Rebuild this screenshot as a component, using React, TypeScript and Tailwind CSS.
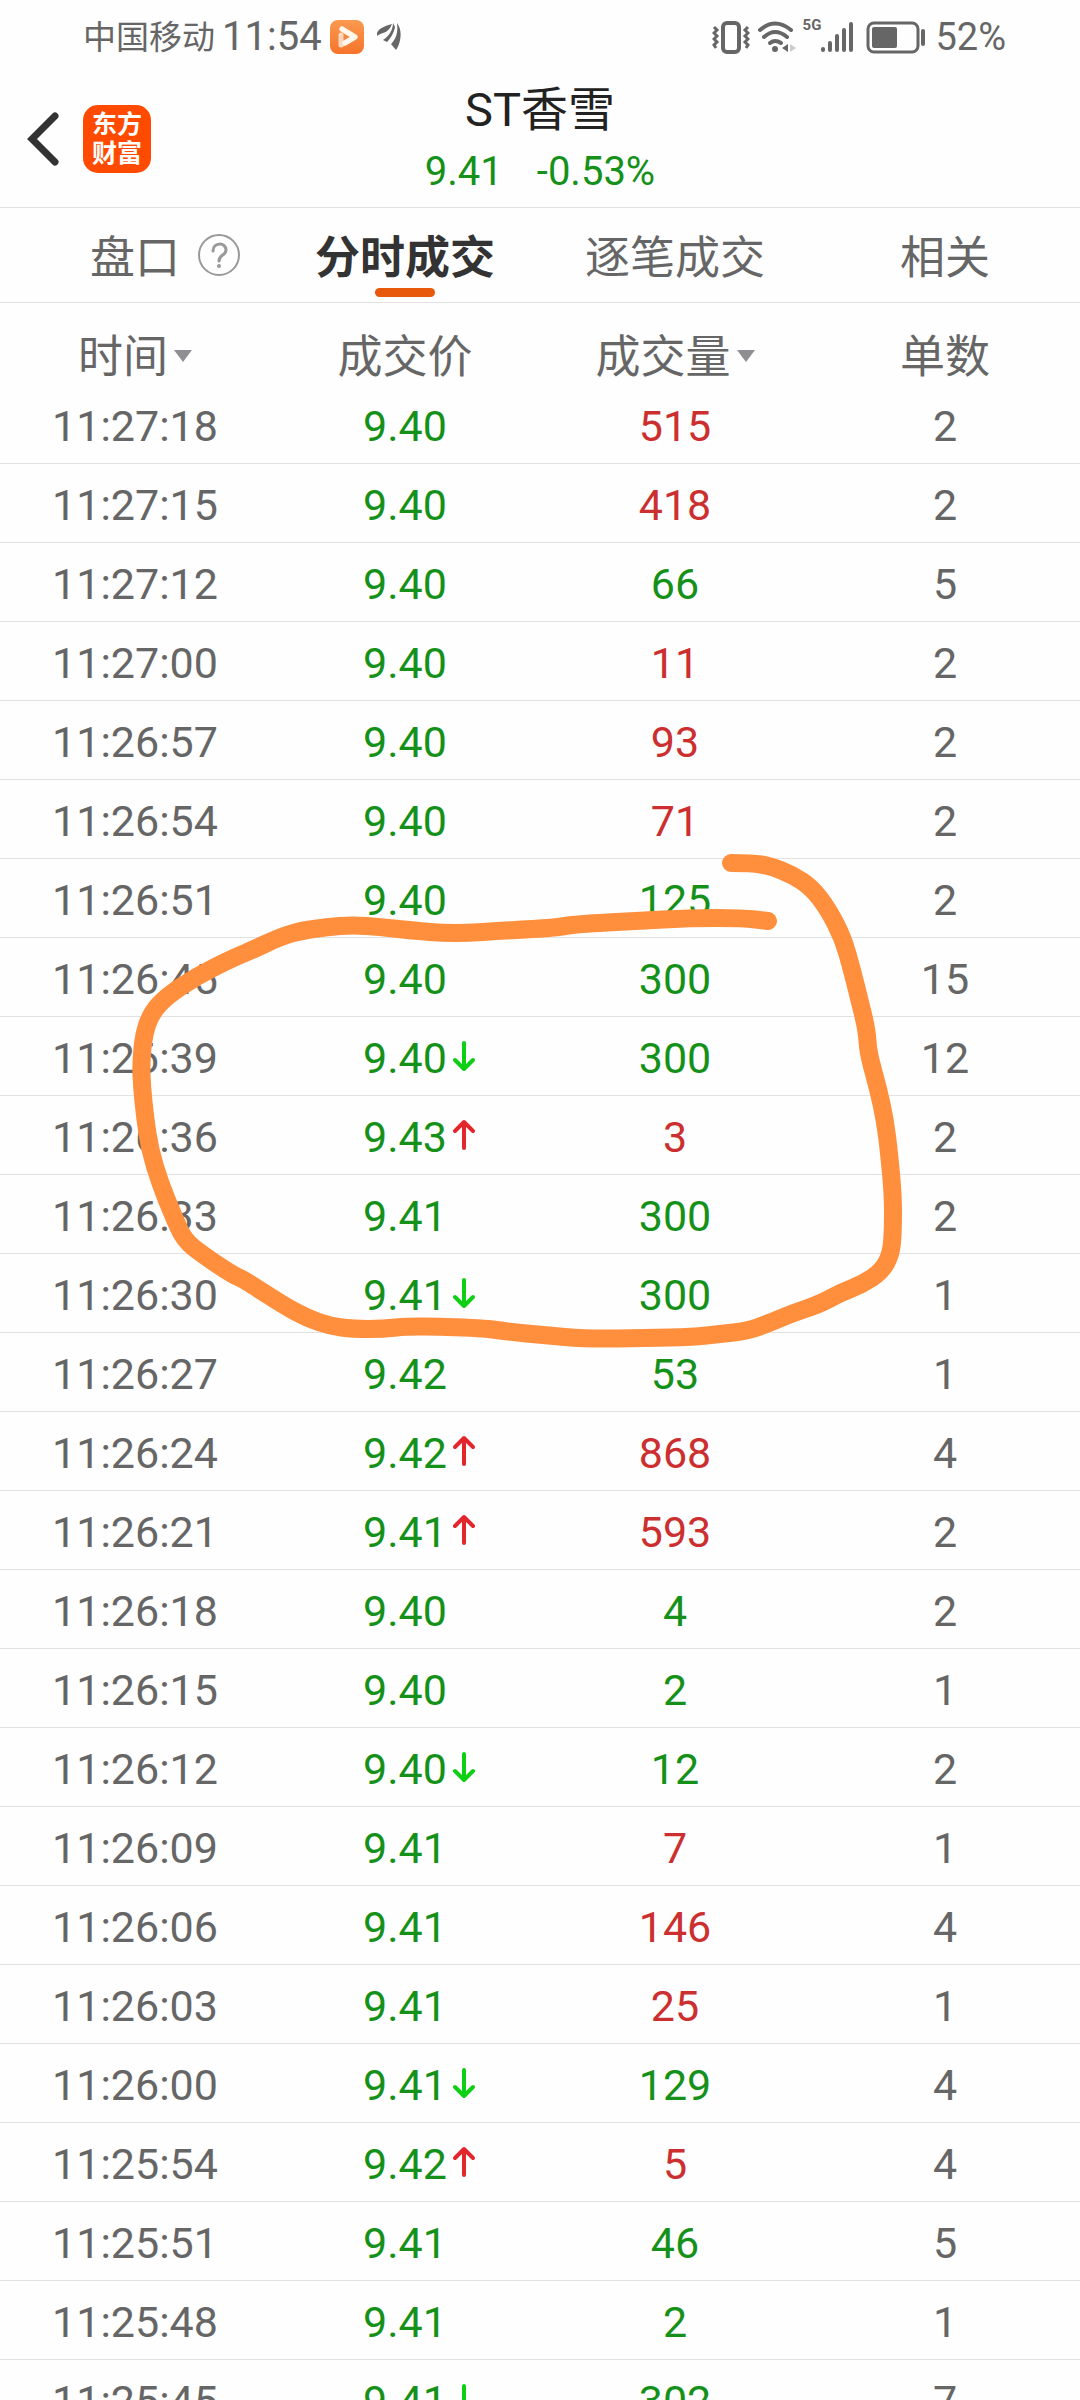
import clsx from 'clsx'

type Tone = 'up' | 'down'

interface Trade {
  time: string
  price: string
  move?: Tone
  volume: number
  side: Tone
  orders: number
}

const trades: Trade[] = [
  { time: '11:27:18', price: '9.40', volume: 515, side: 'up', orders: 2 },
  { time: '11:27:15', price: '9.40', volume: 418, side: 'up', orders: 2 },
  { time: '11:27:12', price: '9.40', volume: 66, side: 'down', orders: 5 },
  { time: '11:27:00', price: '9.40', volume: 11, side: 'up', orders: 2 },
  { time: '11:26:57', price: '9.40', volume: 93, side: 'up', orders: 2 },
  { time: '11:26:54', price: '9.40', volume: 71, side: 'up', orders: 2 },
  { time: '11:26:51', price: '9.40', volume: 125, side: 'down', orders: 2 },
  { time: '11:26:45', price: '9.40', volume: 300, side: 'down', orders: 15 },
  { time: '11:26:39', price: '9.40', move: 'down', volume: 300, side: 'down', orders: 12 },
  { time: '11:26:36', price: '9.43', move: 'up', volume: 3, side: 'up', orders: 2 },
  { time: '11:26:33', price: '9.41', volume: 300, side: 'down', orders: 2 },
  { time: '11:26:30', price: '9.41', move: 'down', volume: 300, side: 'down', orders: 1 },
  { time: '11:26:27', price: '9.42', volume: 53, side: 'down', orders: 1 },
  { time: '11:26:24', price: '9.42', move: 'up', volume: 868, side: 'up', orders: 4 },
  { time: '11:26:21', price: '9.41', move: 'up', volume: 593, side: 'up', orders: 2 },
  { time: '11:26:18', price: '9.40', volume: 4, side: 'down', orders: 2 },
  { time: '11:26:15', price: '9.40', volume: 2, side: 'down', orders: 1 },
  { time: '11:26:12', price: '9.40', move: 'down', volume: 12, side: 'down', orders: 2 },
  { time: '11:26:09', price: '9.41', volume: 7, side: 'up', orders: 1 },
  { time: '11:26:06', price: '9.41', volume: 146, side: 'up', orders: 4 },
  { time: '11:26:03', price: '9.41', volume: 25, side: 'up', orders: 1 },
  { time: '11:26:00', price: '9.41', move: 'down', volume: 129, side: 'down', orders: 4 },
  { time: '11:25:54', price: '9.42', move: 'up', volume: 5, side: 'up', orders: 4 },
  { time: '11:25:51', price: '9.41', volume: 46, side: 'down', orders: 5 },
  { time: '11:25:48', price: '9.41', volume: 2, side: 'down', orders: 1 },
  { time: '11:25:45', price: '9.41', move: 'down', volume: 302, side: 'down', orders: 7 },
]

function StatusBar() {
  return (
    <div className="flex h-[74px] items-center justify-between pl-[83px] pr-[74px] text-[#666]">
      <div className="flex items-center">
        <span className="text-[33px] leading-none">中国移动</span>
        <span className="ml-[7px] text-[40px] leading-none">11:54</span>
        <svg className="ml-[8px]" width="34" height="34" viewBox="0 0 34 34">
          <defs>
            <linearGradient id="play" x1="0" y1="0" x2="0" y2="1">
              <stop offset="0" stopColor="#fa9a50" />
              <stop offset="1" stopColor="#f5742a" />
            </linearGradient>
          </defs>
          <rect width="34" height="34" rx="8" fill="url(#play)" />
          <path d="M11 15 V25 L25 17 L12 9" fill="none" stroke="#fdd9bf" strokeWidth="5" strokeLinecap="round" strokeLinejoin="round" />
          <path d="M12 9 L25 17 L15 23" fill="none" stroke="#fff6ee" strokeWidth="5" strokeLinecap="round" strokeLinejoin="round" />
        </svg>
        <svg className="ml-[13px]" width="24" height="28" viewBox="0 0 24 28" fill="#666">
          <path d="M0 13 V10 C2 5 8 3 15 1 C13 6 10 9 6 10 C3 11 1 12 0 13 Z" />
          <path d="M16 0 L18 4 C17 10 13 16 10 19 L6 17 C12 13 16 7 16 0 Z" />
          <path d="M20 0 C25 6 25 18 19 27 L14 21 C20 15 21 8 20 0 Z" />
        </svg>
      </div>
      <div className="flex items-center">
        {/* Vibrate */}
        <svg width="38" height="33" viewBox="0 0 38 33" fill="none" stroke="#666" strokeWidth="4">
          <rect x="11" y="2" width="16" height="29" rx="4" />
          <path d="M2 6 L5 9 L2 12 L5 15 L2 18 L5 21 L2 24 L4 27" strokeWidth="3" />
          <path d="M36 6 L33 9 L36 12 L33 15 L36 18 L33 21 L36 24 L34 27" strokeWidth="3" />
        </svg>
        {/* Wi-Fi */}
        <svg className="ml-[8px]" width="38" height="32" viewBox="0 0 38 32" fill="none" stroke="#666" strokeWidth="4" strokeLinecap="round">
          <path d="M2 9 Q17 -4 33 9" />
          <path d="M6 16 Q17 6 29 16" />
          <path d="M12 22 Q17 18 23 22" />
          <circle cx="17" cy="28" r="3" fill="#666" stroke="none" />
          <path d="M30 23 V31 L24 27 Z" fill="#666" stroke="none" />
          <path d="M32 23 V31 L38 27 Z" fill="#ccc" stroke="none" />
        </svg>
        <span className="ml-[7px] self-start text-[15px] font-bold leading-none">5G</span>
        <svg width="33" height="32" viewBox="0 0 33 32" stroke="#666" strokeWidth="4" strokeLinecap="round">
          <path d="M2 28 V29 M9 22 V29 M16 15 V29 M23 9 V29 M30 3 V29" />
        </svg>
        <svg className="ml-[12px]" width="60" height="33" viewBox="0 0 60 33">
          <rect x="2" y="2" width="50" height="29" rx="6" fill="none" stroke="#666" strokeWidth="3" />
          <rect x="6" y="6" width="25" height="21" rx="2" fill="#666" />
          <rect x="55" y="8" width="4" height="17" rx="2" fill="#666" />
        </svg>
        <span className="ml-[9px] text-[38px] leading-none">52%</span>
      </div>
    </div>
  )
}

function TitleBar() {
  return (
    <header className="grid h-[134px] grid-cols-[1fr_auto_1fr] items-center border-b border-[#e2e2e2]">
      <div className="flex items-center pb-[3px] pl-[26px]">
        <button type="button" aria-label="返回">
          <svg width="34" height="56" viewBox="0 0 34 56" fill="none" stroke="#333" strokeWidth="7" strokeLinecap="round">
            <path d="M29 5 L6 28 L29 51" />
          </svg>
        </button>
        <div className="ml-[23px] flex size-[68px] flex-col items-center justify-center rounded-[15px] bg-[#ff4a00] text-[25px] font-bold leading-[29px] text-white">
          <span>东方</span>
          <span>财富</span>
        </div>
      </div>
      <div className="flex flex-col items-center gap-[6px]">
        <h1 className="text-[47px] leading-[56px] text-[#222]">ST香雪</h1>
        <p className="flex gap-[34px] text-[40px] leading-[56px] text-[#15911a]">
          <span>9.41</span>
          <span>-0.53%</span>
        </p>
      </div>
    </header>
  )
}

function Tabs() {
  return (
    <nav className="grid h-[95px] grid-cols-4 border-b border-[#e2e2e2] text-[45px] text-[#666]">
      <button type="button" className="flex items-center justify-center pt-[7px]">
        <span className="relative">
          盘口
          <svg className="absolute left-full top-2 ml-[17px]" width="44" height="44" viewBox="0 0 44 44" fill="none" stroke="#999" strokeWidth="2">
            <circle cx="22" cy="22" r="20" />
            <path d="M16 18 C16 9 29 9 29 17 C29 23 22 21 22 28" strokeWidth="3" strokeLinecap="round" />
            <circle cx="22" cy="33" r="2" fill="#999" stroke="none" />
          </svg>
        </span>
      </button>
      <button type="button" className="relative pt-[7px] font-bold text-[#333]">
        分时成交
        <span className="absolute bottom-[5px] left-1/2 h-[9px] w-[60px] -translate-x-1/2 rounded-full bg-[#e8590c]" />
      </button>
      <button type="button" className="pt-[7px]">逐笔成交</button>
      <button type="button" className="pt-[7px]">相关</button>
    </nav>
  )
}

function SortButton({ label }: { label: string }) {
  return (
    <button type="button" className="inline-flex items-center gap-[6px]">
      {label}
      <svg className="mb-[4px]" width="18" height="12" viewBox="0 0 18 12" fill="#8e8e93">
        <path d="M0 0 H18 L9 12 Z" />
      </svg>
    </button>
  )
}

function MoveArrow({ move }: { move: Tone }) {
  return (
    <svg
      className={clsx('absolute left-full top-1/2 ml-[5px] -translate-y-1/2', move === 'up' ? 'text-[#e3262b]' : 'text-[#0fcf14]')}
      width="24"
      height="36"
      viewBox="0 0 24 36"
      fill="none"
      stroke="currentColor"
      strokeWidth="4"
      strokeLinecap="round"
      strokeLinejoin="round"
    >
      {move === 'up' ? <path d="M12 29 V3 M3 12 L12 3 L21 12" /> : <path d="M12 3 V29 M3 20 L12 29 L21 20" />}
    </svg>
  )
}

function TradeTable() {
  return (
    <table className="w-full table-fixed border-collapse text-center text-[#666]">
      <thead>
        <tr className="h-[81px] text-[45px] leading-[52px]">
          <th className="pt-[29px] pb-0 font-normal"><SortButton label="时间" /></th>
          <th className="pt-[29px] pb-0 font-normal">成交价</th>
          <th className="pt-[29px] pb-0 font-normal"><SortButton label="成交量" /></th>
          <th className="pt-[29px] pb-0 font-normal">单数</th>
        </tr>
      </thead>
      <tbody className="text-[43px] leading-[50px]">
        {trades.map((t) => (
          <tr key={t.time} className="h-[79px] border-b border-[#e2e2e2]">
            <td className="px-0 pt-[5px] pb-0">{t.time}</td>
            <td className="px-0 pt-[5px] pb-0 text-[#15911a]">
              <span className="relative">
                {t.price}
                {t.move && <MoveArrow move={t.move} />}
              </span>
            </td>
            <td className={clsx('px-0 pt-[5px] pb-0', t.side === 'up' ? 'text-[#cc2f2f]' : 'text-[#15911a]')}>{t.volume}</td>
            <td className="px-0 pt-[5px] pb-0">{t.orders}</td>
          </tr>
        ))}
      </tbody>
    </table>
  )
}

const loop = [
  [731, 863], [752, 863], [770, 866], [793, 875], [812, 888], [828, 909], [843, 938], [852, 970],
  [860, 1002], [867, 1031], [868, 1052], [878, 1088], [885, 1120], [889, 1152], [893, 1195],
  [893, 1231], [891, 1254], [882, 1271], [863, 1284], [840, 1293], [820, 1304], [793, 1313],
  [767, 1324], [747, 1331], [720, 1334], [693, 1337], [647, 1338], [587, 1339], [543, 1335],
  [510, 1332], [483, 1328], [410, 1326], [383, 1329], [353, 1329], [330, 1326], [307, 1318],
  [283, 1305], [243, 1279], [233, 1275], [203, 1255], [184, 1240], [173, 1215], [160, 1183],
  [150, 1150], [145, 1117], [142, 1087], [141, 1063], [144, 1033], [152, 1012], [167, 996],
  [197, 976], [233, 958], [250, 951], [280, 937], [300, 931], [327, 927], [353, 925], [380, 927],
  [407, 930], [453, 934], [513, 930], [553, 928], [577, 924], [637, 921], [690, 918], [743, 918],
  [768, 921],
]

// Rounds the corners by running each curve from midpoint to midpoint
function smoothPath(points: number[][]) {
  const last = points[points.length - 1]
  let d = `M${points[0][0]} ${points[0][1]}`
  for (let i = 1; i < points.length - 1; i++) {
    const [x, y] = points[i]
    const [nx, ny] = points[i + 1]
    d += ` Q${x} ${y} ${(x + nx) / 2} ${(y + ny) / 2}`
  }
  return `${d} L${last[0]} ${last[1]}`
}

// Freehand marker loop drawn over the list
function MarkerLoop() {
  return (
    <svg className="pointer-events-none absolute left-0 top-0" width="1080" height="1400" viewBox="0 0 1080 1400" fill="none">
      <path d={smoothPath(loop)} stroke="#ff8f3c" strokeWidth="18" strokeLinecap="round" strokeLinejoin="round" />
    </svg>
  )
}

export default function App() {
  return (
    <div className="relative h-screen overflow-hidden bg-[#fefefe] font-[Roboto,'Noto_Sans_CJK_SC',sans-serif]">
      <StatusBar />
      <TitleBar />
      <Tabs />
      <TradeTable />
      <MarkerLoop />
    </div>
  )
}
